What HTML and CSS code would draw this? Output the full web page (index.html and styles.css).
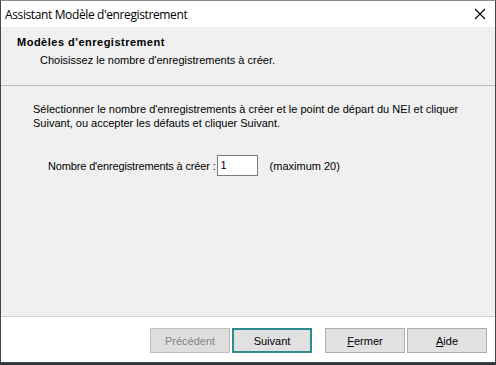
FILE: index.html
```html
<!DOCTYPE html>
<html lang="fr">
<head>
<meta charset="utf-8">
<title>Assistant Modèle d'enregistrement</title>
<link rel="stylesheet" href="styles.css">
</head>
<body>
<div class="window">
  <div class="titlebar">
    <span class="title">Assistant Modèle d'enregistrement</span>
    <svg class="close" width="12" height="12" viewBox="0 0 12 12"><path d="M1 1 L11 11 M11 1 L1 11" stroke="#000" stroke-width="1.1" fill="none"/></svg>
  </div>
  <div class="header">
    <div class="h-title">Modèles d'enregistrement</div>
    <div class="h-sub">Choisissez le nombre d'enregistrements à créer.</div>
  </div>
  <div class="body">
    <p class="intro">Sélectionner le nombre d'enregistrements à créer et le point de départ du NEI et cliquer<br>Suivant, ou accepter les défauts et cliquer Suivant.</p>
    <div class="row">
      <span class="label">Nombre d'enregistrements à créer :</span>
      <span class="input">1</span>
      <span class="hint">(maximum 20)</span>
    </div>
  </div>
  <div class="footer">
    <button class="btn disabled">Précédent</button>
    <button class="btn default">Suivant</button>
    <button class="btn sep"><u>F</u>ermer</button>
    <button class="btn"><u>A</u>ide</button>
  </div>
</div>
</body>
</html>
```
FILE: styles.css
```css
html, body {
  margin: 0;
  padding: 0;
  background: #2e3438;
  width: 496px;
  height: 365px;
  overflow: hidden;
}
.window {
  box-sizing: border-box;
  width: 496px;
  height: 363px;
  border: 1px solid #3d4a52;
  border-top-color: #8a8a8a;
  background: #f0f0f0;
  display: flex;
  flex-direction: column;
  font-family: "Liberation Sans", Arial, sans-serif;
  font-size: 11px;
  color: #000;
}
.titlebar {
  height: 26px;
  background: #fff;
  display: flex;
  align-items: center;
  justify-content: space-between;
  padding: 0 9px 0 4px;
  flex: none;
}
.title {
  font-family: "Open Sans", "Liberation Sans", sans-serif;
  font-size: 12px;
  letter-spacing: -0.38px;
}
.close { display: block; }
.header {
  height: 59px;
  flex: none;
  box-sizing: border-box;
  padding: 8px 0 0 16px;
  border-bottom: 1px solid #bcbcbc;
}
.h-title {
  font-weight: bold;
  line-height: 14px;
  letter-spacing: 0.5px;
}
.h-sub {
  margin: 4px 0 0 23px;
  line-height: 14px;
}
.body {
  flex: 1;
  padding: 16px 0 0 32px;
  border-bottom: 1px solid #cfcfcf;
}
.intro {
  margin: 0;
  line-height: 14px;
}
.row {
  display: flex;
  align-items: center;
  margin: 25px 0 0 15px;
}
.label { letter-spacing: -0.15px; }
.input {
  box-sizing: border-box;
  width: 41px;
  height: 21px;
  border: 1px solid #7a7a7a;
  background: #fff;
  padding: 2px 0 0 3px;
  line-height: 14px;
  margin-left: 1px;
}
.hint { margin-left: 12px; }
.footer {
  height: 45px;
  flex: none;
  background: #fff;
  display: flex;
  justify-content: flex-end;
  align-items: flex-start;
  padding: 11px 8px 0 0;
  box-sizing: border-box;
  gap: 2px;
}
.btn {
  box-sizing: border-box;
  width: 80px;
  height: 25px;
  border: 1px solid #adadad;
  background: #e1e1e1;
  font-family: "Liberation Sans", Arial, sans-serif;
  font-size: 11px;
  color: #000;
  padding: 0;
}
.btn.disabled {
  color: #838383;
  background: #e0dddd;
  border-color: #bfbfbf;
}
.btn.default {
  border: 2px solid #2a8c8c;
}
.btn.sep { margin-left: 11px; }
```
